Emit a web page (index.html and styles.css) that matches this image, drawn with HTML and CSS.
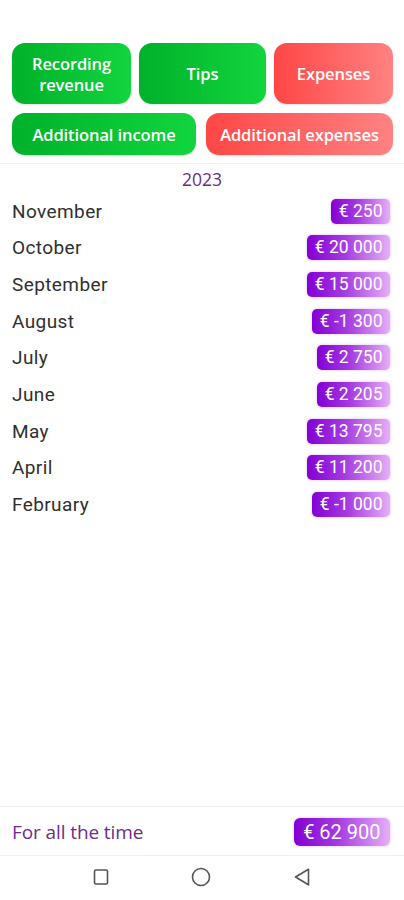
FILE: index.html
```html
<!DOCTYPE html>
<html>
<head>
<meta charset="utf-8">
<link rel="stylesheet" href="styles.css">
</head>
<body>
<div class="app">
  <div class="actions">
    <div class="action-row">
      <button class="btn green w119">Recording<br>revenue</button>
      <button class="btn green w127">Tips</button>
      <button class="btn red w119">Expenses</button>
    </div>
    <div class="action-row gap10">
      <button class="btn green short w184">Additional income</button>
      <button class="btn red short w187">Additional expenses</button>
    </div>
  </div>
  <div class="content">
    <div class="year">2023</div>
    <ul class="months">
      <li class="month"><span class="name">November</span><span class="badge">€ 250</span></li>
      <li class="month"><span class="name">October</span><span class="badge">€ 20 000</span></li>
      <li class="month"><span class="name">September</span><span class="badge">€ 15 000</span></li>
      <li class="month"><span class="name">August</span><span class="badge">€ -1 300</span></li>
      <li class="month"><span class="name">July</span><span class="badge">€ 2 750</span></li>
      <li class="month"><span class="name">June</span><span class="badge">€ 2 205</span></li>
      <li class="month"><span class="name">May</span><span class="badge">€ 13 795</span></li>
      <li class="month"><span class="name">April</span><span class="badge">€ 11 200</span></li>
      <li class="month"><span class="name">February</span><span class="badge">€ -1 000</span></li>
    </ul>
  </div>
  <div class="total">
    <span class="total-label">For all the time</span>
    <span class="badge big">€ 62 900</span>
  </div>
  <nav class="navbar">
    <svg width="16" height="18" viewBox="0 0 16 18"><rect x="1.5" y="2" width="13" height="14" rx="1.5" fill="none" stroke="#555" stroke-width="1.6"/></svg>
    <svg width="20" height="20" viewBox="0 0 20 20"><circle cx="10" cy="10" r="8.5" fill="none" stroke="#555" stroke-width="1.6"/></svg>
    <svg width="18" height="20" viewBox="0 0 18 20"><path d="M15.5 2.2 L2.5 10 L15.5 17.8 Z" fill="none" stroke="#555" stroke-width="1.6" stroke-linejoin="round"/></svg>
  </nav>
</div>
</body>
</html>
```
FILE: styles.css
```css
* { box-sizing: border-box; }
html, body { margin: 0; padding: 0; background: #fff; }
.app {
  width: 404px;
  height: 900px;
  display: flex;
  flex-direction: column;
  font-family: Roboto, "Noto Sans", sans-serif;
}
.actions {
  padding: 43px 11px 8px 12px;
  display: flex;
  flex-direction: column;
  gap: 9px;
  border-bottom: 1px solid #f0f0f0;
}
.action-row {
  display: flex;
  gap: 8px;
}
.action-row.gap10 { gap: 10px; }
.btn {
  border: none;
  border-radius: 13px;
  height: 61px;
  color: #fff;
  font-family: "Open Sans", "Noto Sans", sans-serif;
  font-weight: 600;
  font-size: 16.5px;
  line-height: 21px;
  letter-spacing: -0.1px;
  padding: 0 2px;
  box-shadow: 0 1px 2px rgba(0,0,0,0.12);
}
.btn.short { height: 42px; }
.w119 { width: 119px; }
.w127 { width: 127px; }
.w184 { width: 184px; }
.w187 { width: 187px; }
.green { background: linear-gradient(90deg, #00b129 0%, #12d53e 100%); }
.red { background: linear-gradient(90deg, #ff4646 0%, #ff8282 100%); }
.content { flex: 1; }
.year {
  text-align: center;
  color: #6a2d8c;
  font-family: "Open Sans", "Noto Sans", sans-serif;
  font-size: 17.5px;
  height: 29px;
  line-height: 29px;
  padding-top: 1px;
}
.months {
  list-style: none;
  margin: 0;
  padding: 0;
}
.month {
  height: 36.65px;
  display: flex;
  align-items: center;
  justify-content: space-between;
  padding: 0 14px 0 12px;
}
.name {
  font-size: 19px;
  letter-spacing: 0.4px;
  color: #2f2f2f;
}
.badge {
  height: 25px;
  line-height: 25px;
  padding: 0 7.5px;
  border-radius: 5px;
  color: #fff;
  font-size: 17.5px;
  background: linear-gradient(90deg, #8300d4 0%, #a53ae0 45%, #e6aef8 100%);
  box-shadow: 0 0 3px rgba(150, 60, 200, 0.35);
}
.badge.big {
  height: 28px;
  line-height: 28px;
  font-size: 20px;
  padding: 0 9.5px;
  border-radius: 6px;
}
.total {
  height: 50px;
  border-top: 1px solid #f0f0f0;
  border-bottom: 1px solid #f0f0f0;
  display: flex;
  align-items: center;
  justify-content: space-between;
  padding: 2px 14px 0 12px;
}
.total-label {
  font-family: "Open Sans", "Noto Sans", sans-serif;
  color: #6a2d8c;
  font-size: 19px;
  letter-spacing: -0.1px;
}
.navbar {
  height: 44px;
  display: flex;
  align-items: center;
  justify-content: space-between;
  padding: 0 93px 2px 93px;
}
```
